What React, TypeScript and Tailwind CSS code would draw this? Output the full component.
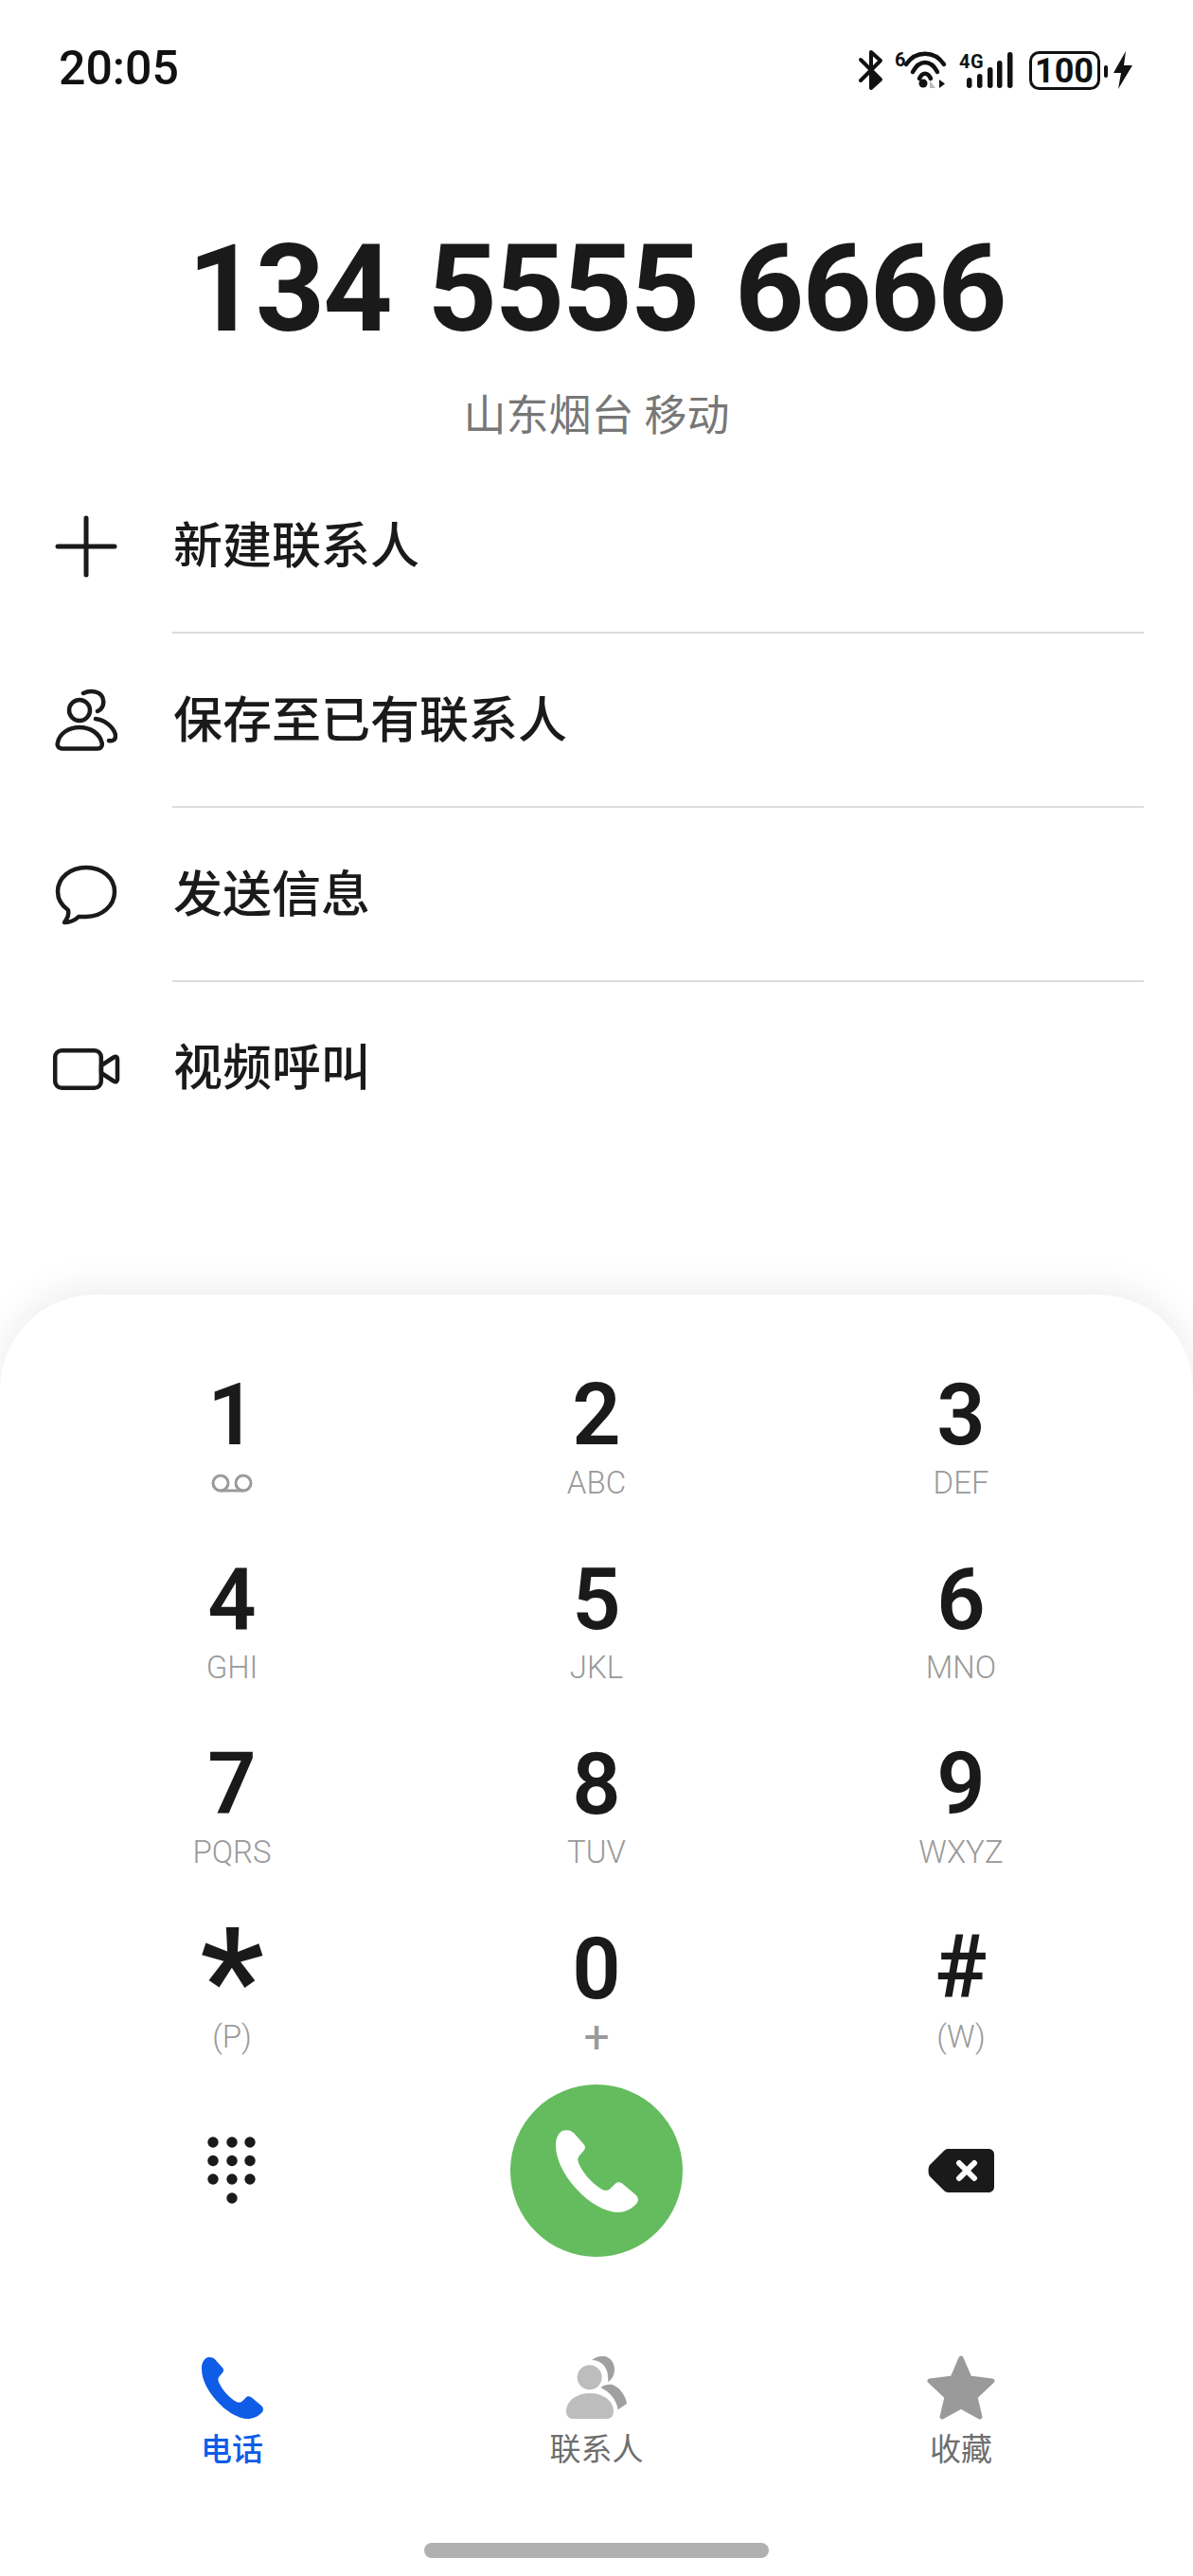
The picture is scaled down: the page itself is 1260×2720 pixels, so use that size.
import React from "react";

const sans = "font-['Roboto','Noto_Sans_CJK_SC',sans-serif]";

const HANDSET =
  "M5 0.5C9 -0.5 11 0.5 13 2L20 10C22 12 21.5 14 20 15.5L17 19C15.5 21 16 23 17.5 26C21 33 27 39 33 43C35.5 44.5 37.5 44.5 39.5 43L43 39.5C45 37.5 47 38 49 39.5L58 47C60.5 49 60.5 52 58.5 54C55 58 50 60 45 60C36 60 24 53 15 43C6 33 0 22 0 11C0 6 2 2 5 0.5Z";

const keys = [
  { d: "1", s: "" },
  { d: "2", s: "ABC" },
  { d: "3", s: "DEF" },
  { d: "4", s: "GHI" },
  { d: "5", s: "JKL" },
  { d: "6", s: "MNO" },
  { d: "7", s: "PQRS" },
  { d: "8", s: "TUV" },
  { d: "9", s: "WXYZ" },
  { d: "*", s: "(P)" },
  { d: "0", s: "+" },
  { d: "#", s: "(W)" },
];

const rows = [
  {
    label: "新建联系人",
    icon: (
      <svg width="66" height="66" viewBox="0 0 66 66" fill="none" stroke="#1a1a1a" strokeWidth="5" strokeLinecap="round">
        <path d="M33 3V63M3 33H63" />
      </svg>
    ),
  },
  {
    label: "保存至已有联系人",
    icon: (
      <svg width="66" height="68" viewBox="0 0 66 68" fill="none" stroke="#1a1a1a" strokeWidth="4.5" strokeLinecap="round">
        <circle cx="26" cy="23" r="11" />
        <path d="M8 63.5H45C49 63.5 50.5 60 49.5 57C47 47 37 41 26 41C15 41 5 47 3 57C2 60 3.5 63.5 8 63.5Z" />
        <path d="M30 5C38 1 50 3 51 12C52 18 49 22 45 24" />
        <path d="M43 32C53 33 62 41 64 49C64.5 54 61 56 57 55" />
      </svg>
    ),
  },
  {
    label: "发送信息",
    icon: (
      <svg width="68" height="66" viewBox="0 0 68 66" fill="none" stroke="#1a1a1a" strokeWidth="4.5" strokeLinejoin="round">
        <path d="M34 4C17 4 4 15 4 29.5C4 37 8 44 15 49C16 53 14 58 11 62C17 62 22 60 26 56C28 56 31 56 34 56C51 56 64 44 64 29.5C64 15 51 4 34 4Z" />
      </svg>
    ),
  },
  {
    label: "视频呼叫",
    icon: (
      <svg width="74" height="48" viewBox="0 0 74 48" fill="none" stroke="#1a1a1a" strokeWidth="4.5" strokeLinejoin="round">
        <rect x="4.2" y="4.2" width="48.6" height="39.6" rx="7" />
        <path d="M53 20L66 11.5C68.5 10 70 11 70 13.5V34.5C70 37 68.5 38 66 36.5L53 28Z" />
      </svg>
    ),
  },
];

function StatusIcons() {
  return (
    <svg className="mt-[6px]" width="300" height="46" viewBox="0 0 300 46" fill="none">
      {/* bluetooth */}
      <path d="M9 11L30 32L20 41V3L30 12L9 33" stroke="#111" strokeWidth="4" strokeLinecap="round" strokeLinejoin="round" />
      <path d="M21 22L30 31L21 40Z" fill="#111" />
      {/* wifi */}
      <text x="45" y="18" fontSize="20" fontWeight="700" fontFamily="Roboto, sans-serif" fill="#111">6</text>
      <path d="M57 16C67 1 87 1 97 16" stroke="#111" strokeWidth="4.5" strokeLinecap="round" />
      <path d="M64 24C71 10.7 83 10.7 90 24" stroke="#111" strokeWidth="4.5" strokeLinecap="round" />
      <path d="M71 31C74 24 80 24 83 31" stroke="#111" strokeWidth="4.5" strokeLinecap="round" />
      <circle cx="75" cy="36" r="4.5" fill="#111" />
      <path d="M82 33V41H88Z" fill="#bbb" />
      <path d="M92 32V41L98 36.5Z" fill="#111" />
      {/* signal */}
      <text x="113" y="20" fontSize="20" fontWeight="700" fontFamily="Roboto, sans-serif" letterSpacing="0.5" fill="#111">4G</text>
      <rect x="121" y="30" width="5.5" height="11" rx="2.7" fill="#111" />
      <rect x="132" y="26" width="5.5" height="15" rx="2.7" fill="#111" />
      <rect x="143" y="19" width="5.5" height="22" rx="2.7" fill="#111" />
      <rect x="153" y="12" width="5.5" height="29" rx="2.7" fill="#111" />
      <rect x="164" y="3" width="5.5" height="38" rx="2.7" fill="#111" />
      {/* battery */}
      <rect x="188.5" y="3.5" width="72" height="38" rx="9" stroke="#111" strokeWidth="3" />
      <text x="224" y="35" fontSize="36" fontWeight="700" textAnchor="middle" fontFamily="Roboto, sans-serif" fill="#111">100</text>
      <rect x="266" y="17" width="4" height="13" rx="2" fill="#111" />
      <path d="M289 2L276 25H284L281 42L296 17H287Z" fill="#111" />
    </svg>
  );
}

function Key({ d, s }: { d: string; s: string }) {
  // the star glyph is much larger than the digits on this dialer
  const digit =
    d === "*"
      ? "text-[150px] leading-[110px]"
      : d === "#"
        ? "text-[92px] leading-[84px]"
        : "text-[90px] leading-[88px]";
  return (
    <div className="flex h-[195px] flex-col items-center">
      <div className={`${sans} h-[88px] font-semibold text-[#1a1a1a] ${digit}`}>{d}</div>
      <div
        className={`${sans} mt-[7px] flex h-[40px] items-center leading-[40px] text-[#9a9a9a] ${s === "+" ? "text-[48px] font-normal" : "text-[33px] font-light"}`}
      >
        {d === "1" ? (
          <svg width="46" height="20" viewBox="0 0 46 20" fill="none" stroke="#9a9a9a" strokeWidth="3">
            <circle cx="11" cy="10" r="8" />
            <circle cx="35" cy="10" r="8" />
            <path d="M11 18H35" />
          </svg>
        ) : (
          s
        )}
      </div>
    </div>
  );
}

export default function App() {
  return (
    <div className={`${sans} flex h-[2720px] w-[1260px] flex-col overflow-hidden bg-white`}>
      {/* status bar */}
      <div className="flex h-[140px] items-start justify-between pt-[46px] pr-[60px] pl-[62px]">
        <span className="text-[50px] leading-[52px] font-medium text-[#111]">20:05</span>
        <StatusIcons />
      </div>

      {/* number */}
      <div className="mt-[100px] text-center text-[128px] leading-[130px] font-bold tracking-[-2px] text-[#1a1a1a] [word-spacing:9px]">
        134 5555 6666
      </div>
      <div className="mt-[40px] text-center text-[45px] leading-[60px] text-[#777]">山东烟台 移动</div>

      {/* actions */}
      <div className="mt-[15px] flex flex-col">
        {rows.map((row, i) => (
          <div key={row.label} className="flex h-[184px] items-center pr-[52px]">
            <div className="flex w-[182px] shrink-0 justify-center">{row.icon}</div>
            <div
              className={`flex h-full flex-1 items-center pl-[1px] text-[52px] font-medium text-[#1a1a1a] ${i < 3 ? "border-b-2 border-[#dcdcdc] pt-[4px]" : ""}`}
            >
              {row.label}
            </div>
          </div>
        ))}
      </div>

      {/* dial pad */}
      <div className="mt-[146px] flex flex-1 flex-col items-center rounded-t-[100px] bg-white pt-[84px] shadow-[0_-6px_40px_rgba(0,0,0,0.08)]">
        <div className="grid w-[1155px] grid-cols-3">
          {keys.map((k) => (
            <Key key={k.d} d={k.d} s={k.s} />
          ))}
        </div>

        <div className="mt-[-30px] grid w-[1155px] grid-cols-3 items-center">
          <div className="flex justify-center">
            <svg width="52" height="72" viewBox="0 0 52 72" fill="#1a1a1a">
              {[6, 26, 45].flatMap((x) =>
                [6, 25.5, 45].map((y) => <circle key={`${x}-${y}`} cx={x} cy={y} r="5.7" />),
              )}
              <circle cx="26" cy="65" r="5.7" />
            </svg>
          </div>
          <div className="flex justify-center">
            <div className="flex size-[182px] items-center justify-center rounded-full bg-[#64bc5e]">
              <svg width="87" height="87" viewBox="0 0 60 60" fill="#fff">
                <path d={HANDSET} />
              </svg>
            </div>
          </div>
          <div className="flex justify-center">
            <svg width="70" height="46" viewBox="0 0 70 46">
              <path
                d="M22 0H64C67.5 0 70 2.5 70 6V40C70 43.5 67.5 46 64 46H22C20 46 18.5 45.5 17 44L2 29C0 27 0 19 2 17L17 2C18.5 0.5 20 0 22 0Z"
                fill="#1a1a1a"
              />
              <path d="M33 15L49 31M49 15L33 31" stroke="#fff" strokeWidth="6" strokeLinecap="round" />
            </svg>
          </div>
        </div>

        {/* tabs */}
        <div className="mt-[103px] grid w-[1155px] grid-cols-3">
          <div className="flex flex-col items-center">
            <div className="flex h-[70px] items-center">
              <svg width="65" height="65" viewBox="0 0 60 60" fill="#0f5ce6">
                <path d={HANDSET} />
              </svg>
            </div>
            <span className="mt-[11px] text-[33px] leading-[40px] font-medium text-[#0f5ce6]">电话</span>
          </div>
          <div className="flex flex-col items-center">
            <div className="flex h-[70px] items-center">
              <svg width="66" height="66" viewBox="0 0 66 66">
                <path d="M28 4C33 0 38 -0.5 42 0C49 2 52 8 52 14C52 20 49 25 45 27C46 20 44 12 39 8C36 5.5 32 4 28 4Z" fill="#a0a0a0" />
                <path d="M37.5 33C41 30 46 29.5 50 30C58 33 64 42 65 50L55.5 56.5C55 48 48 38 37.5 33Z" fill="#a0a0a0" />
                <circle cx="25.7" cy="22.3" r="13" fill="#bdbdbd" />
                <path d="M1 58C1 47 12 39 26 39C40 39 51 47 51 58C51 63 48 66 44 66H8C4 66 1 63 1 58Z" fill="#bdbdbd" />
              </svg>
            </div>
            <span className="mt-[11px] text-[33px] leading-[40px] text-[#6e6e6e]">联系人</span>
          </div>
          <div className="flex flex-col items-center">
            <div className="flex h-[70px] items-center">
              <svg width="74" height="70" viewBox="0 0 74 70" fill="#9a9a9a" stroke="#9a9a9a" strokeWidth="5" strokeLinejoin="round">
                <path d="M37 4L46 25L70 28L52 45L57 66L37 55L17 66L22 45L4 28L28 25Z" />
              </svg>
            </div>
            <span className="mt-[11px] text-[33px] leading-[40px] text-[#6e6e6e]">收藏</span>
          </div>
        </div>

        <div className="mt-[78px] h-[16px] w-[364px] rounded-full bg-[#b0b0b0]" />
      </div>
    </div>
  );
}
